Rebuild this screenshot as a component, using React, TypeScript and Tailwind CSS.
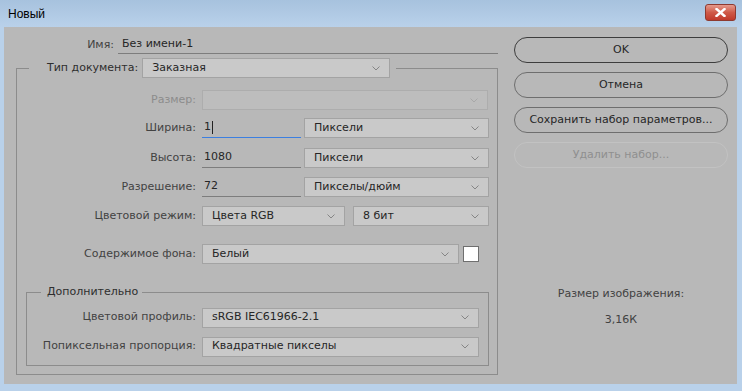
import React from 'react';

const font = "font-['DejaVu_Sans',sans-serif]";

const Chevron = ({ faint = false }: { faint?: boolean }) => (
  <svg width="8" height="5" viewBox="0 0 8 5" className="shrink-0">
    <path d="M0.5 0.5 L4 4 L7.5 0.5" fill="none" stroke={faint ? '#a8a8a8' : '#858585'} strokeWidth="1" />
  </svg>
);

type SelectProps = {
  value?: string;
  width: string;
  disabled?: boolean;
};

const Select = ({ value = '', width, disabled = false }: SelectProps) => (
  <div
    className={`${width} h-[20px] flex items-center justify-between pl-[9px] pr-[9px] border ${
      disabled ? 'border-[#adadad] bg-[#bdbdbd]' : 'border-[#a3a3a3] bg-[#c9c9c9]'
    } text-[#262626]`}
  >
    <span className="whitespace-nowrap">{value}</span>
    <Chevron faint={disabled} />
  </div>
);

const Label = ({ children, width, disabled = false }: { children: React.ReactNode; width: string; disabled?: boolean }) => (
  <div className={`${width} text-right whitespace-nowrap ${disabled ? 'text-[#8c8c8c]' : 'text-[#424242]'}`}>{children}</div>
);

const Row = ({ children, className = '' }: { children: React.ReactNode; className?: string }) => (
  <div className={`flex items-center h-[20px] ${className}`}>{children}</div>
);

const TextInput = ({ value, focused = false }: { value: string; focused?: boolean }) => (
  <div
    className={`w-[99px] h-[20px] flex items-center pl-[2px] border-b ${
      focused ? 'border-[#3c7fe0]' : 'border-[#7d7d7d]'
    } text-[#262626]`}
  >
    {value}
    {focused && <span className="inline-block w-px h-[13px] bg-[#222] ml-px" />}
  </div>
);

const DialogButton = ({ children, primary = false, disabled = false }: { children: React.ReactNode; primary?: boolean; disabled?: boolean }) => (
  <div
    className={`w-[214px] h-[26px] rounded-full flex items-center justify-center border ${
      primary ? 'border-[#3d3d3d]' : disabled ? 'border-[#c2c2c2]' : 'border-[#6e6e6e]'
    } ${disabled ? 'text-[#8f8f8f]' : 'text-[#262626]'}`}
  >
    {children}
  </div>
);

export default function App() {
  return (
    <div className={`w-[742px] h-[391px] bg-[#b9d1ea] flex flex-col text-[11px] ${font}`}>
      <div className="h-[27px] shrink-0 flex items-center justify-between pl-[8px] pr-[6px] bg-gradient-to-b from-[#a7c2de] to-[#b9d1ea]">
        <span className="font-['Liberation_Sans',sans-serif] text-[12px] text-black">Новый</span>
        <div className="w-[31px] h-[17px] -mt-[3px] rounded-[3px] border border-[#8e3a30] bg-gradient-to-b from-[#e49a8d] via-[#cf5a48] to-[#c0392b] flex items-center justify-center">
          <svg width="11" height="9" viewBox="0 0 11 9">
            <path d="M1.5 1 L9.5 8 M9.5 1 L1.5 8" stroke="#fff" strokeWidth="2.4" strokeLinecap="square" />
          </svg>
        </div>
      </div>

      <div className="flex-1 ml-[4px] mr-[5px] mb-[7px] bg-[#b8b8b8] flex">
        <div className="w-[494px] shrink-0 flex flex-col">
          <div className="flex items-end h-[19px] mt-[8px]">
            <Label width="w-[110px] pb-[1px]">Имя:</Label>
            <div className="ml-[4px] w-[380px] h-[19px] flex items-end pb-[1px] pl-[4px] border-b border-[#7d7d7d] text-[#262626]">
              Без имени-1
            </div>
          </div>

          <fieldset className="ml-[12px] mt-[4px] w-[482px] border border-[#8c8c8c] pb-[8px]">
            <legend className="ml-[12px] pl-[18px] pr-[6px]">
              <div className="flex items-center h-[20px]">
                <span className="text-[#2e2e2e] whitespace-nowrap">Тип документа:</span>
                <div className="ml-[4px]">
                  <Select value="Заказная" width="w-[248px]" />
                </div>
              </div>
            </legend>

            <Row className="mt-[12px]">
              <Label width="w-[179px]" disabled>Размер:</Label>
              <div className="ml-[6px]">
                <Select width="w-[286px]" disabled />
              </div>
            </Row>
            <Row className="mt-[8px]">
              <Label width="w-[179px]">Ширина:</Label>
              <div className="ml-[6px]">
                <TextInput value="1" focused />
              </div>
              <div className="ml-[3px]">
                <Select value="Пиксели" width="w-[185px]" />
              </div>
            </Row>
            <Row className="mt-[10px]">
              <Label width="w-[179px]">Высота:</Label>
              <div className="ml-[6px]">
                <TextInput value="1080" />
              </div>
              <div className="ml-[3px]">
                <Select value="Пиксели" width="w-[185px]" />
              </div>
            </Row>
            <Row className="mt-[9px]">
              <Label width="w-[179px]">Разрешение:</Label>
              <div className="ml-[6px]">
                <TextInput value="72" />
              </div>
              <div className="ml-[3px]">
                <Select value="Пикселы/дюйм" width="w-[185px]" />
              </div>
            </Row>
            <Row className="mt-[9px]">
              <Label width="w-[179px]">Цветовой режим:</Label>
              <div className="ml-[6px]">
                <Select value="Цвета RGB" width="w-[143px]" />
              </div>
              <div className="ml-[8px]">
                <Select value="8 бит" width="w-[136px]" />
              </div>
            </Row>
            <Row className="mt-[18px]">
              <Label width="w-[179px]">Содержимое фона:</Label>
              <div className="ml-[6px]">
                <Select value="Белый" width="w-[257px]" />
              </div>
              <div className="ml-[4px] w-[16px] h-[16px] bg-white border border-[#6f6f6f]" />
            </Row>

            <fieldset className="ml-[9px] mt-[20px] w-[463px] border border-[#8c8c8c] pb-[8px]">
              <legend className="ml-[14px] pl-[6px] pr-[4px] text-[#2e2e2e]">Дополнительно</legend>
              <Row className="mt-[7px]">
                <Label width="w-[169px]">Цветовой профиль:</Label>
                <div className="ml-[6px]">
                  <Select value="sRGB IEC61966-2.1" width="w-[277px]" />
                </div>
              </Row>
              <Row className="mt-[9px]">
                <Label width="w-[169px]">Попиксельная пропорция:</Label>
                <div className="ml-[6px]">
                  <Select value="Квадратные пикселы" width="w-[277px]" />
                </div>
              </Row>
            </fieldset>
          </fieldset>
        </div>

        <div className="ml-[16px] mt-[10px] flex flex-col">
          <div className="flex flex-col gap-[9px]">
            <DialogButton primary>OK</DialogButton>
            <DialogButton>Отмена</DialogButton>
            <DialogButton>Сохранить набор параметров...</DialogButton>
            <DialogButton disabled>Удалить набор...</DialogButton>
          </div>
          <div className="mt-[118px] w-[214px] flex flex-col items-center text-[#424242]">
            <div>Размер изображения:</div>
            <div className="mt-[9px]">3,16К</div>
          </div>
        </div>
      </div>
    </div>
  );
}
